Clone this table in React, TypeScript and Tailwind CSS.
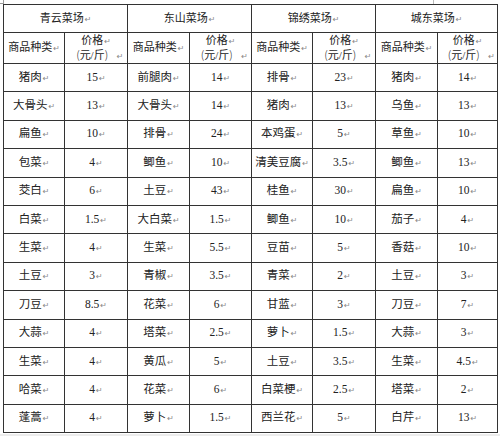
import React from 'react';

const markets = ['青云菜场', '东山菜场', '锦绣菜场', '城东菜场'];

// each row: [name, price] for the four markets
const rows: [string, string][][] = [
  [['猪肉', '15'], ['前腿肉', '14'], ['排骨', '23'], ['猪肉', '14']],
  [['大骨头', '13'], ['大骨头', '14'], ['猪肉', '13'], ['乌鱼', '13']],
  [['扁鱼', '10'], ['排骨', '24'], ['本鸡蛋', '5'], ['草鱼', '10']],
  [['包菜', '4'], ['鲫鱼', '10'], ['清美豆腐', '3.5'], ['鲫鱼', '13']],
  [['茭白', '6'], ['土豆', '43'], ['桂鱼', '30'], ['扁鱼', '10']],
  [['白菜', '1.5'], ['大白菜', '1.5'], ['鲫鱼', '10'], ['茄子', '4']],
  [['生菜', '4'], ['生菜', '5.5'], ['豆苗', '5'], ['香菇', '10']],
  [['土豆', '3'], ['青椒', '3.5'], ['青菜', '2'], ['土豆', '3']],
  [['刀豆', '8.5'], ['花菜', '6'], ['甘蓝', '3'], ['刀豆', '7']],
  [['大蒜', '4'], ['塔菜', '2.5'], ['萝卜', '1.5'], ['大蒜', '3']],
  [['生菜', '4'], ['黄瓜', '5'], ['土豆', '3.5'], ['生菜', '4.5']],
  [['哈菜', '4'], ['花菜', '6'], ['白菜梗', '2.5'], ['塔菜', '2']],
  [['蓬蒿', '4'], ['萝卜', '1.5'], ['西兰花', '5'], ['白芹', '13']],
];

const colWidths = ['w-[61px]', 'w-[63px]', 'w-[62px]', 'w-[62px]', 'w-[61px]', 'w-[63px]', 'w-[62px]', 'w-[60px]'];

function Mark() {
  return <span className="text-[8px] text-[#888] font-['DejaVu_Sans',sans-serif] ml-px">↵</span>;
}

export default function App() {
  return (
    <div className="w-[500px] h-[436px] bg-white flex flex-col text-[#222] font-['Liberation_Serif','Noto_Sans_CJK_SC',serif]">
      <div className="relative h-[4px] shrink-0">
        <div className="absolute left-0 top-[3px] w-[3px] h-px bg-[#999]" />
        <div className="absolute left-[3px] top-0 w-px h-[4px] bg-[#999]" />
        <div className="absolute left-[433px] top-0 w-px h-[4px] bg-[#bbb]" />
      </div>
      <table className="ml-[3px] w-[495px] table-fixed border-collapse border border-[#333] text-[11px] leading-[14px]">
        <colgroup>
          {colWidths.map((w, i) => (
            <col key={i} className={w} />
          ))}
        </colgroup>
        <tbody>
          <tr className="h-[28px]">
            {markets.map((m) => (
              <td key={m} colSpan={2} className="border border-[#333] text-center align-middle">
                {m}
                <Mark />
              </td>
            ))}
          </tr>
          <tr className="h-[31px]">
            {markets.map((m) => (
              <React.Fragment key={m}>
                <td className="border border-[#333] text-center align-middle">
                  商品种类
                  <Mark />
                </td>
                <td className="border border-[#333] text-center align-middle leading-[13px]">
                  <div>
                    价格
                    <Mark />
                  </div>
                  <div className="whitespace-nowrap">
                    <span className="inline-block w-[11px] text-right font-['Noto_Sans_CJK_SC',sans-serif] font-light">(</span>
                    元/斤
                    <span className="inline-block w-[11px] text-left font-['Noto_Sans_CJK_SC',sans-serif] font-light">)</span>
                    <Mark />
                  </div>
                </td>
              </React.Fragment>
            ))}
          </tr>
          {rows.map((row, ri) => (
            <tr key={ri} className="h-[28.4px]">
              {row.map(([name, price], ci) => (
                <React.Fragment key={ci}>
                  <td className="border border-[#333] text-center align-middle text-[11.5px]">
                    {name}
                    <Mark />
                  </td>
                  <td className="border border-[#333] text-center align-middle text-[11.5px]">
                    {price}
                    <Mark />
                  </td>
                </React.Fragment>
              ))}
            </tr>
          ))}
        </tbody>
      </table>
      <div className="flex-1 mt-px bg-[#ececec]" />
    </div>
  );
}
